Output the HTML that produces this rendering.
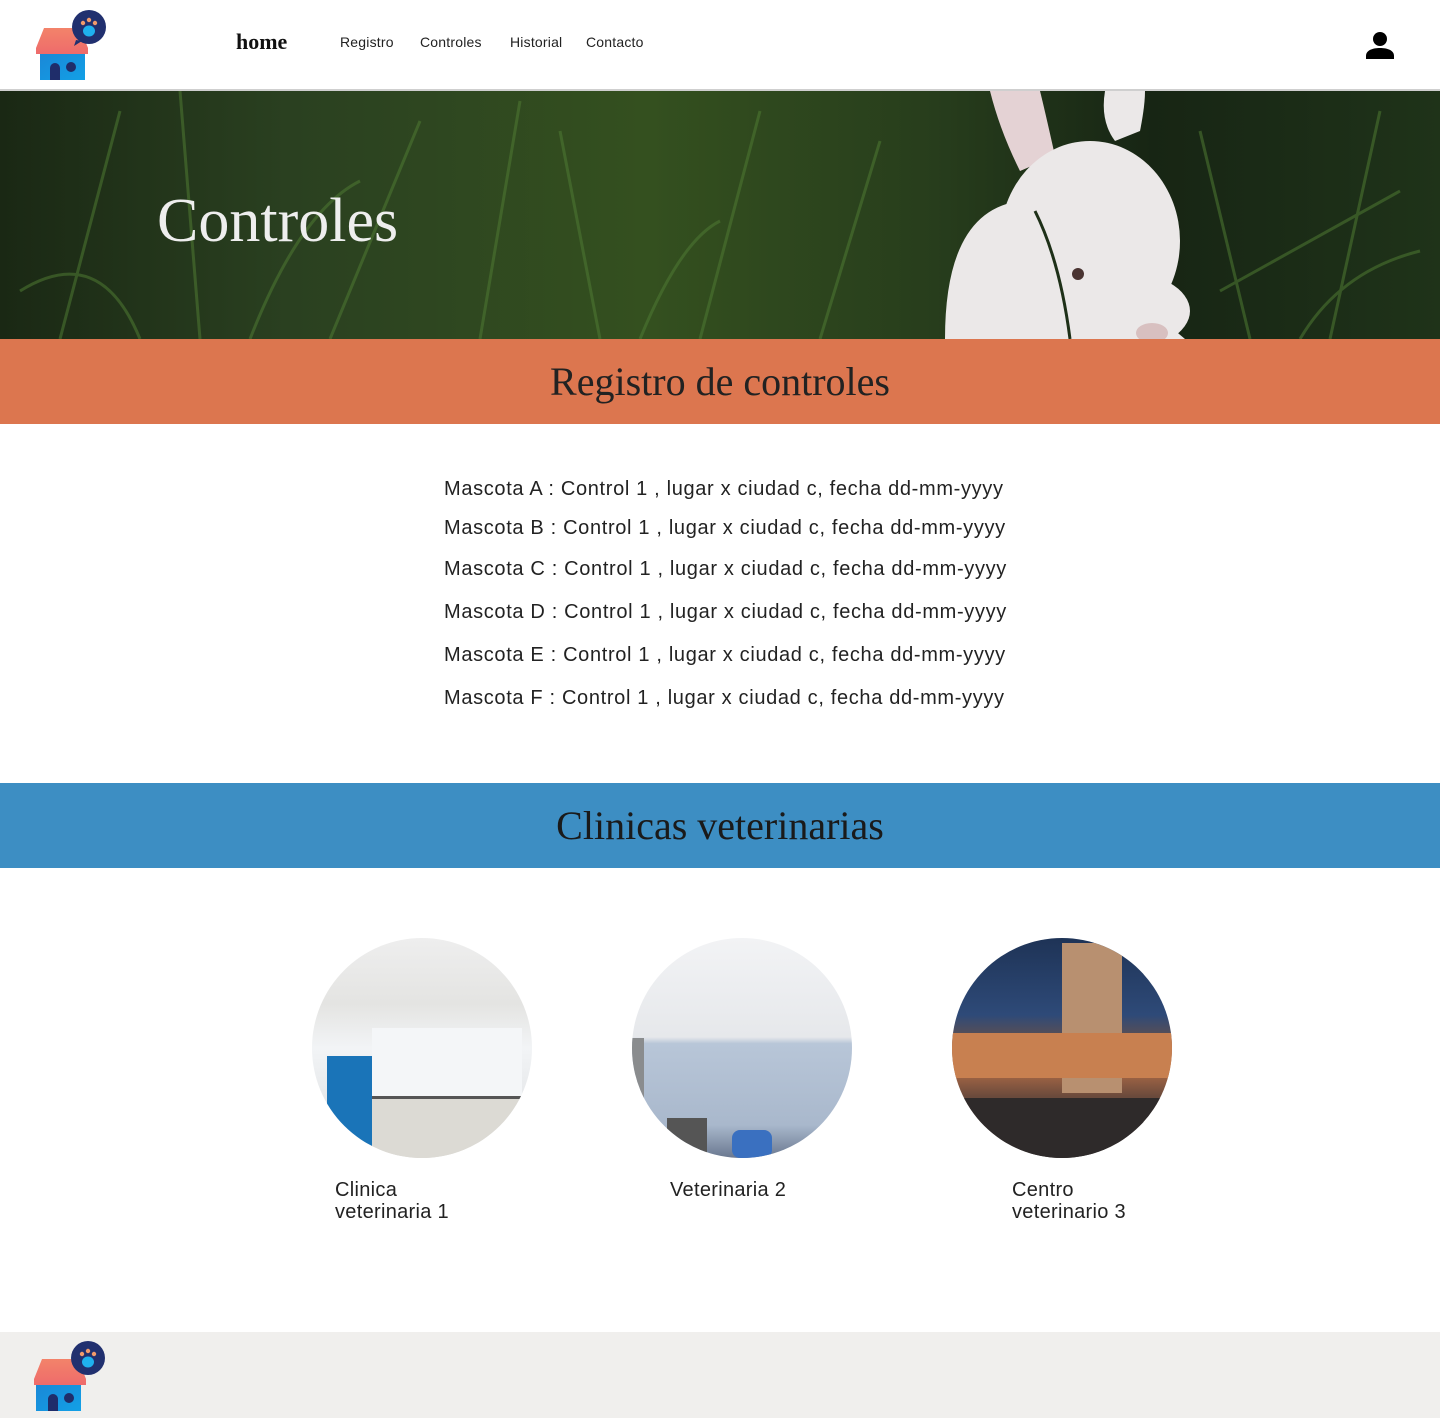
<!DOCTYPE html>
<html><head><meta charset="utf-8"><style>
*{margin:0;padding:0;box-sizing:border-box}
body{width:1440px;height:1418px;position:relative;background:#fff;font-family:"Liberation Sans",sans-serif;overflow:hidden}
.abs{position:absolute}
.nav{font-size:14px;color:#222;top:34px;letter-spacing:0.2px}
.serif{font-family:"Liberation Serif",serif}
.row{position:absolute;left:444px;font-size:20px;color:#222;white-space:nowrap;letter-spacing:0.66px}
.circ{position:absolute;width:220px;height:220px;border-radius:50%;overflow:hidden;top:938px}
.cap{position:absolute;font-size:20px;color:#222;line-height:22px;letter-spacing:0.3px}
</style></head><body>
<svg class="abs" style="left:30px;top:8px" width="80" height="76" viewBox="0 0 80 76">
<defs><linearGradient id="rf" x1="0" y1="0" x2="0" y2="1"><stop offset="0" stop-color="#f3836a"/><stop offset="1" stop-color="#ee6b6b"/></linearGradient>
<linearGradient id="bd" x1="0" y1="0" x2="1" y2="1"><stop offset="0" stop-color="#1b86d6"/><stop offset="1" stop-color="#12a0e6"/></linearGradient></defs>
<rect x="10" y="42" width="45" height="30" fill="url(#bd)"/>
<path d="M14 20 H50 L58 40 V46 H6 V40 Z" fill="url(#rf)"/>
<path d="M20 72 V60 a5 5 0 0 1 10 0 V72Z" fill="#1f2d6a"/>
<circle cx="41" cy="59" r="5" fill="#1f2d6a"/>
<circle cx="59" cy="19" r="17" fill="#21306f"/>
<path d="M46 32 L44 38 L52 33Z" fill="#21306f"/>
<ellipse cx="59" cy="23" rx="6" ry="5.5" fill="#1fb1ee"/>
<circle cx="53" cy="15" r="2.2" fill="#f29a6b"/><circle cx="59" cy="12" r="2.2" fill="#f29a6b"/><circle cx="65" cy="15" r="2.2" fill="#f29a6b"/>
</svg>
<div class="abs serif" style="left:236px;top:29px;font-size:22px;font-weight:bold;color:#111">home</div>
<div class="abs nav" style="left:340px">Registro</div>
<div class="abs nav" style="left:420px">Controles</div>
<div class="abs nav" style="left:510px">Historial</div>
<div class="abs nav" style="left:586px">Contacto</div>
<svg class="abs" style="left:1365px;top:30px" width="30" height="30" viewBox="0 0 30 30"><circle cx="15" cy="9" r="7" fill="#000"/><path d="M1 29 V26 C1 20 8 18 15 18 C22 18 29 20 29 26 V29Z" fill="#000"/></svg>
<div class="abs" style="left:0;top:89px;width:1440px;height:2px;background:#cfcfcf"></div>
<div class="abs" style="left:0;top:91px;width:1440px;height:248px;background:linear-gradient(90deg,#1a2814 0%,#2a4020 20%,#34501f 45%,#273d1c 65%,#172514 80%,#1f3319 100%);overflow:hidden">
<svg width="1440" height="248" style="position:absolute;left:0;top:0">
<g stroke="#4f7a33" stroke-width="3" opacity=".55" fill="none">
<path d="M60 248 L120 20"/><path d="M200 248 L180 0"/><path d="M330 248 L420 30"/><path d="M480 248 L520 10"/><path d="M600 248 L560 40"/><path d="M700 248 L760 20"/><path d="M820 248 L880 50"/><path d="M1250 248 L1200 40"/><path d="M1330 248 L1380 20"/><path d="M1220 200 L1400 100"/>
<path d="M20 200 Q100 150 140 248"/><path d="M250 248 Q300 120 360 90"/><path d="M640 248 Q680 150 720 130"/><path d="M1300 248 Q1340 180 1420 160"/>
</g>
<g fill="#ebe8e8">
<path d="M990 0 Q1000 40 1020 80 L1055 65 Q1045 20 1040 0Z" fill="#e4d2d4"/>
<path d="M1105 0 Q1100 30 1115 50 L1140 40 Q1145 15 1145 0Z"/>
<path d="M945 248 Q945 120 1020 110 Q1080 100 1080 160 L1185 248Z"/>
<ellipse cx="1090" cy="150" rx="90" ry="100"/>
<ellipse cx="1120" cy="220" rx="70" ry="40"/>
</g>
<circle cx="1078" cy="183" r="6" fill="#4a3432"/>
<ellipse cx="1152" cy="242" rx="16" ry="10" fill="#d8c0c0"/>
<path d="M1035 120 Q1060 170 1070 248" stroke="#1e3018" stroke-width="3" fill="none"/>
</svg>
<div class="abs serif" style="left:157px;top:95px;font-size:62px;color:#eee">Controles</div>
</div>
<div class="abs serif" style="left:0;top:339px;width:1440px;height:85px;background:#dc764f;text-align:center;font-size:40px;line-height:85px;color:#222">Registro de controles</div>
<div class="row" style="top:478px">Mascota A : Control 1 , lugar x ciudad c, fecha dd-mm-yyyy</div>
<div class="row" style="top:517px">Mascota B : Control 1 , lugar x ciudad c, fecha dd-mm-yyyy</div>
<div class="row" style="top:558px">Mascota C : Control 1 , lugar x ciudad c, fecha dd-mm-yyyy</div>
<div class="row" style="top:601px">Mascota D : Control 1 , lugar x ciudad c, fecha dd-mm-yyyy</div>
<div class="row" style="top:644px">Mascota E : Control 1 , lugar x ciudad c, fecha dd-mm-yyyy</div>
<div class="row" style="top:687px">Mascota F : Control 1 , lugar x ciudad c, fecha dd-mm-yyyy</div>
<div class="abs serif" style="left:0;top:783px;width:1440px;height:85px;background:#3d8ec3;text-align:center;font-size:40px;line-height:85px;color:#1a1a1a">Clinicas veterinarias</div>
<div class="circ" style="left:312px;background:linear-gradient(180deg,#eeeeee 0%,#e4e4e2 30%,#f2f4f6 50%,#e8eaec 70%,#d8d6d2 100%)">
<div class="abs" style="left:15px;top:118px;width:50px;height:90px;background:#1a74b8"></div>
<div class="abs" style="left:60px;top:90px;width:150px;height:70px;background:#f4f6f8"></div>
<div class="abs" style="left:60px;top:158px;width:160px;height:70px;background:#dcdad4;border-top:3px solid #555"></div>
</div>
<div class="circ" style="left:632px;background:linear-gradient(180deg,#f2f3f5 0%,#e6e8eb 45%,#b8c6d8 48%,#a9b8cc 85%,#6a7890 100%)">
<div class="abs" style="left:0;top:100px;width:12px;height:90px;background:#8a8c8e"></div>
<div class="abs" style="left:35px;top:180px;width:40px;height:40px;background:#555"></div>
<div class="abs" style="left:100px;top:192px;width:40px;height:28px;background:#3a70c0;border-radius:8px"></div>
</div>
<div class="circ" style="left:952px;background:linear-gradient(180deg,#1e3356 0%,#2e4a78 35%,#6a5048 48%,#b87048 58%,#6a4a3c 72%,#3a3230 100%)">
<div class="abs" style="left:110px;top:5px;width:60px;height:150px;background:#b89070"></div>
<div class="abs" style="left:0;top:95px;width:220px;height:45px;background:#c88050"></div>
<div class="abs" style="left:0;top:160px;width:220px;height:60px;background:#2e2a2a"></div>
</div>
<div class="cap" style="left:335px;top:1179px">Clinica<br>veterinaria 1</div>
<div class="cap" style="left:670px;top:1179px">Veterinaria 2</div>
<div class="cap" style="left:1012px;top:1179px">Centro<br>veterinario 3</div>
<div class="abs" style="left:0;top:1332px;width:1440px;height:86px;background:#f0efed"></div>
<svg class="abs" style="left:30px;top:1339px" width="80" height="76" viewBox="0 0 80 76">
<rect x="6" y="42" width="45" height="30" fill="url(#bd)"/>
<path d="M12 20 H48 L56 40 V46 H4 V40 Z" fill="url(#rf)"/>
<path d="M18 72 V60 a5 5 0 0 1 10 0 V72Z" fill="#1f2d6a"/>
<circle cx="39" cy="59" r="5" fill="#1f2d6a"/>
<circle cx="58" cy="19" r="17" fill="#21306f"/>
<ellipse cx="58" cy="23" rx="6" ry="5.5" fill="#1fb1ee"/>
<circle cx="52" cy="15" r="2.2" fill="#f29a6b"/><circle cx="58" cy="12" r="2.2" fill="#f29a6b"/><circle cx="64" cy="15" r="2.2" fill="#f29a6b"/>
</svg>
</body></html>
